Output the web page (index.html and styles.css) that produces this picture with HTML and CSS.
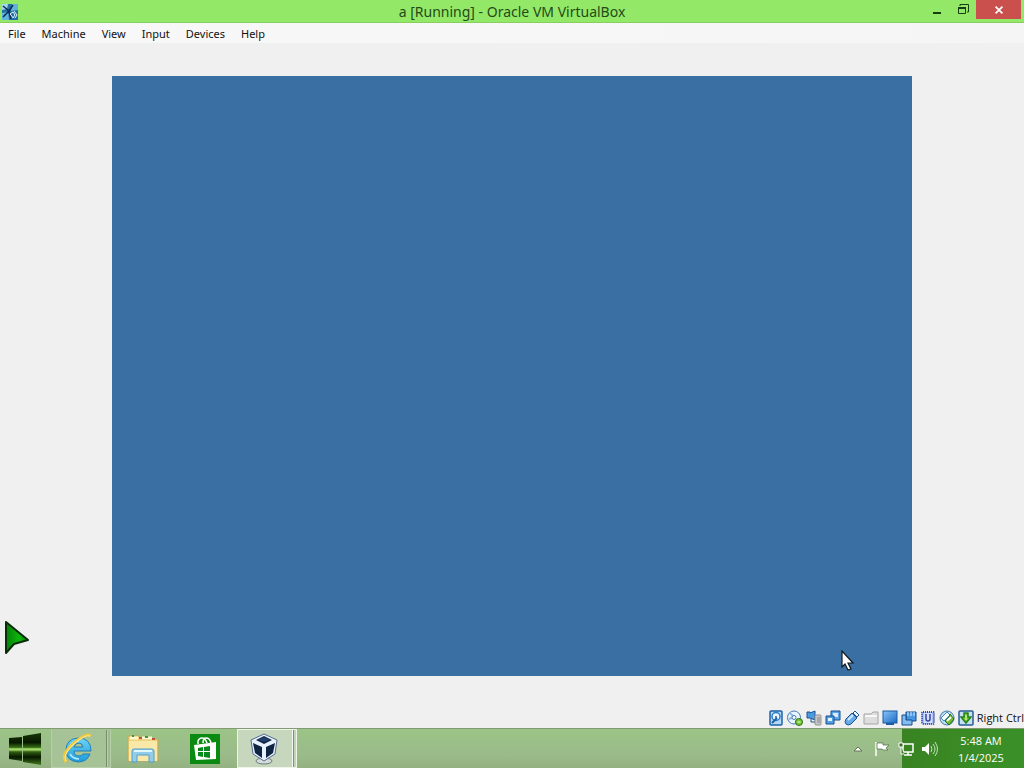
FILE: index.html
```html
<!DOCTYPE html>
<html lang="en">
<head>
<meta charset="utf-8">
<title>a [Running] - Oracle VM VirtualBox</title>
<link rel="stylesheet" href="styles.css">
</head>
<body>
<div class="desktop">
  <header class="titlebar">
    <svg class="app-icon" viewBox="0 0 18 18" aria-hidden="true">
      <rect x="1" y="1" width="16" height="16" fill="#2370a6"/>
      <path d="M1 1h6l-1 5-5 1z" fill="#a6d8ec"/><path d="M11 1h6v6l-7 1z" fill="#60b4da"/>
      <path d="M1 10l6-1 1 8H1z" fill="#5fb3df"/>
      <path d="M2 3l6 5 2 8M12 2L8 8l-6 6" stroke="#0c2c50" stroke-width="1.500" fill="none"/>
      <path d="M9 11l3-2 2 3-2 3-2-3zM13 8l3 4-2 3" stroke="#e4f4fa" fill="none"/>
    </svg>
    <h1 class="title">a [Running] - Oracle VM VirtualBox</h1>
    <div class="window-buttons">
      <button class="window-button" aria-label="Minimize"><svg viewBox="0 0 14 14"><path d="M3 9h8v2H3z" fill="#163c10"/></svg></button>
      <button class="window-button" aria-label="Restore"><svg viewBox="0 0 14 14"><path d="M4 3V1.500h8.500V9H11" stroke="#163c10" fill="none"/><path d="M2.500 4.500h7v6h-7z" stroke="#163c10" fill="none"/><path d="M2 4h8v2H2z" fill="#163c10"/></svg></button>
      <button class="window-button close" aria-label="Close"><svg viewBox="0 0 14 14"><path d="M3 3l8 8M11 3l-8 8" stroke="#fff" stroke-width="2" fill="none"/></svg></button>
    </div>
  </header>
  <nav class="menubar" aria-label="Main menu">
    <button>File</button><button>Machine</button><button>View</button><button>Input</button><button>Devices</button><button>Help</button>
  </nav>
  <main class="workspace">
    <div class="guest-screen">
      <svg class="guest-cursor" viewBox="0 0 14 22" aria-hidden="true"><path d="M1 1v16l3-3 3 6 3-1-3-6h5z" fill="#fff" stroke="#101820" stroke-width="1.200"/></svg>
    </div>
    <svg class="host-cursor" viewBox="0 0 26 36" aria-hidden="true"><defs><linearGradient id="arrow"><stop offset="0" stop-color="#087f08"/><stop offset=".6" stop-color="#0cb70c"/><stop offset="1" stop-color="#078407"/></linearGradient></defs><path d="M2 2v31l8-9 14-4z" fill="url(#arrow)" stroke="#082d08" stroke-width="2" stroke-linejoin="round"/></svg>
  </main>
  <footer class="statusbar">
    <svg viewBox="0 0 16 16"><rect x="2" y="1" width="12" height="14" rx="1" fill="#b5d8f6" stroke="#1e61a8" stroke-width="1.500"/><circle cx="8" cy="6.500" r="4" fill="#e9f6ff" stroke="#2d7dc8" stroke-width="1.500"/><path d="M4 13l5-5" stroke="#1e61a8" stroke-width="2"/><circle cx="8" cy="7" r="1" fill="#1e61a8"/></svg>
    <svg viewBox="0 0 16 16"><circle cx="7" cy="7.500" r="6.500" fill="#e8f4ff" stroke="#467ab0"/><path d="M7 7L3 3M7 7l-5 2" stroke="#8bbbe4" stroke-width="2"/><circle cx="7" cy="7.500" r="2" fill="#fff" stroke="#467ab0"/><circle cx="12" cy="12" r="3.500" fill="#75c62e" stroke="#2c701d"/><path d="M10.500 12h3" stroke="#fff"/></svg>
    <svg viewBox="0 0 16 16"><path d="M1 2h3v1l5-2v9L4 8H1z" fill="#4d9be0" stroke="#185594"/><path d="M5 9v3h4" stroke="#185594" fill="none"/><rect x="9" y="5" width="6" height="10" rx="1" fill="#c8c8c8" stroke="#919191"/><path d="M11 8h3M11 10h3M11 12h3" stroke="#888"/></svg>
    <svg viewBox="0 0 16 16"><path d="M6 1h9v9H6z" fill="#5da5e8" stroke="#174e8c"/><path d="M8 3h5v4H8z" fill="#d5edff"/><path d="M1 6h8v8H1z" fill="#539ee4" stroke="#174e8c"/><path d="M3 8h4v3H3z" fill="#e6f5ff"/></svg>
    <svg viewBox="0 0 16 16"><path d="M2 9l6-6 5 5-6 6q-3 2-5 0t0-5z" fill="#65aaea" stroke="#1c5592"/><path d="M9 3l2-2 4 4-2 2z" fill="#eef8ff" stroke="#1c5592"/><path d="M4 10l5-5" stroke="#d2ebff" stroke-width="2"/></svg>
    <svg viewBox="0 0 16 16"><path d="M1 4h7l2-2h5v12H1z" fill="#ddd" stroke="#a5a5a5"/><path d="M2 6h12" stroke="#f7f7f7" stroke-width="2"/></svg>
    <svg viewBox="0 0 16 16"><defs><linearGradient id="display" x2="1" y2="1"><stop stop-color="#87c5fa"/><stop offset="1" stop-color="#1b69c2"/></linearGradient></defs><rect x="1" y="1" width="14" height="12" fill="url(#display)" stroke="#1b5ca4"/><path d="M4 14h8" stroke="#1b5ca4" stroke-width="2"/></svg>
    <svg viewBox="0 0 16 16"><path d="M5 2h10v9H5z" fill="#4796e4" stroke="#164d88"/><path d="M1 5h4v5h6v5H1z" fill="#82bdf2" stroke="#164d88"/><path d="M7 2v4M10 2v4M13 2v4" stroke="#d5edff"/></svg>
    <svg viewBox="0 0 16 16"><rect x="2" y="2" width="12" height="12" rx="1" fill="#aebff7" stroke="#3548a0" stroke-width="2" stroke-dasharray="1 1"/><rect x="4" y="3" width="8" height="10" fill="#d4defd"/><path d="M6 4v5q0 2 2 2t2-2V4" stroke="#3446a6" stroke-width="1.500" fill="none"/></svg>
    <svg viewBox="0 0 16 16"><circle cx="8" cy="8" r="7" fill="#b9dcf7" stroke="#49799e"/><path d="M2 8l6-6 3 3-6 6z" fill="#f3fbff" stroke="#4b8abc"/><path d="M6 11l4 4 5-6-4-5-1 3z" fill="#6dbf2d" stroke="#286c1f"/><path d="M8 11l4-4" stroke="#fff" stroke-width="2"/></svg>
    <svg viewBox="0 0 16 16"><rect x="1" y="1" width="14" height="14" rx="1" fill="#c5dff5" stroke="#285c93" stroke-width="1.500"/><path d="M6 3h4v4h3l-5 6-5-6h3z" fill="#73cb25" stroke="#27801d" stroke-width="1.500"/><path d="M8 5v5" stroke="#efffd9"/></svg>
    <span class="host-key">Right Ctrl</span>
  </footer>
  <nav class="taskbar" aria-label="Taskbar">
    <button class="start" aria-label="Start"><svg viewBox="0 0 34 32"><defs><linearGradient id="start" x2="0" y2="1"><stop stop-color="#173706"/><stop offset=".3" stop-color="#071800"/><stop offset=".45" stop-color="#376e16"/><stop offset=".51" stop-color="#bdf579"/><stop offset=".59" stop-color="#315d14"/><stop offset=".75" stop-color="#071600"/><stop offset="1" stop-color="#427b1c"/></linearGradient></defs><path d="M1 5l13-1v24L1 26zM15 3l18-3v32l-18-3z" fill="url(#start)"/><path d="M1 16h32" stroke="#91c760"/></svg></button>
    <div class="apps">
      <button class="app open" aria-label="Internet Explorer"><svg viewBox="0 0 32 32"><defs><linearGradient id="globe" x2="0" y2="1"><stop stop-color="#6fd3f6"/><stop offset="1" stop-color="#1f9bda"/></linearGradient></defs><path d="M28 21q-3 8-12 8Q4 28 4 17T16 5q13 0 13 13H12q0 5 5 5 3 0 4-2zM12 14h9q-1-4-4-4-4 0-5 4z" fill="url(#globe)" stroke="#2380b8"/><path d="M8 13q3-5 9-5M8 21q3 5 9 5" stroke="#b1ecff" stroke-width="1.500" fill="none"/><path d="M4 29Q-2 22 12 10 25-1 29 3" stroke="#efc83b" stroke-width="3" fill="none"/><path d="M4 28Q0 21 13 10 24 1 28 3" stroke="#fff0a1" fill="none"/></svg></button>
      <button class="app" aria-label="File Explorer"><svg viewBox="0 0 32 32"><path d="M1 3h11l2 3h17v22H1z" fill="#efd37b" stroke="#c2a855"/><path d="M3 5h8M15 5h10" stroke="#fff8ce" stroke-width="3"/><path d="M5 3h2M18 4h3" stroke="#439641" stroke-width="2"/><path d="M12 5h3M25 6h3" stroke="#bd5144" stroke-width="2"/><path d="M2 8h28v20H2z" fill="#f9e8a8"/><path d="M5 29V18q0-2 2-2h18q2 0 2 2v11h-5v-7H10v7z" fill="#91cce9" stroke="#539fc8"/><path d="M7 18h18" stroke="#e2f8ff" stroke-width="2"/></svg></button>
      <button class="app" aria-label="Store"><svg viewBox="0 0 32 32"><path d="M1 1h30v30H1z" fill="#0b8a12"/><path d="M5 12l22-3v17L7 27z" fill="#fff"/><path d="M9 11V8q1-3 4-3t5 5M14 10q0-5 3-5 4 0 5 5" stroke="#fff" stroke-width="1.500" fill="none"/><path d="M9 15l5-1v4H9zm6-1l6-1v5h-6zm-6 5h5v5l-5-1zm6 0h6v6l-6-1z" fill="#07891c"/></svg></button>
      <button class="app open active" aria-label="Oracle VM VirtualBox"><svg viewBox="0 0 32 32"><ellipse cx="16" cy="28" rx="8" ry="3" fill="#d5dcda" stroke="#6e7c7b"/><path d="M16 1l13 6-2 14-11 7-11-7L3 7z" fill="#e7f1ff" stroke="#566c8d"/><path d="M8 7l8-4 8 4-8 4zM5 10l9 4v11l-7-5zM18 14l9-4-2 10-7 5z" fill="#102541"/><path d="M10 7l6-3 6 3-6 2z" fill="#223f6b"/></svg></button>
    </div>
    <div class="tray">
      <button class="tray-button" aria-label="Show hidden icons"><svg viewBox="0 0 18 18"><path d="M5 11l4-4 4 4z" fill="#fff" stroke="#617455"/></svg></button>
      <button class="tray-button" aria-label="Action Center"><svg viewBox="0 0 18 18"><path d="M3 2v14" stroke="#fff" stroke-width="1.500"/><path d="M4 3h6v2h6l-3 3 2 2h-5L9 9H4z" fill="#fff" stroke="#4c693d" stroke-width=".7"/></svg></button>
      <button class="tray-button" aria-label="Network"><svg viewBox="0 0 18 18"><path d="M6 4h10v8H6zM11 12v3M7 15h8" stroke="#fff" stroke-width="1.500" fill="none"/><path d="M2 3h4v4H2zM4 7v7h3" stroke="#fff" fill="#376a2b"/></svg></button>
      <button class="tray-button" aria-label="Volume"><svg viewBox="0 0 18 18"><path d="M1 7h3l4-4v12l-4-4H1z" fill="#fff"/><path d="M10 6q2 3 0 6M12 4q4 5 0 10M14 2q5 7 0 14" stroke="#e9f7df" stroke-width=".8" fill="none"/></svg></button>
      <button class="clock"><time datetime="2025-01-04T05:48">5:48 AM<br>1/4/2025</time></button>
    </div>
  </nav>
</div>
</body>
</html>
```
FILE: styles.css
```css
* { box-sizing: border-box; }
body { margin: 0; font-family: "Open Sans", "Noto Sans", sans-serif; font-size: 11px; color: #111; }
button { font: inherit; color: inherit; border: 0; padding: 0; margin: 0; background: transparent; }
svg { display: block; flex: none; }
.desktop { min-height: 100vh; display: flex; flex-direction: column; background: #f0f0f0; }
.titlebar { display: grid; grid-template-columns: 1fr auto 1fr; align-items: center; height: 23px; background: #94e868; border-bottom: 1px solid #86cf60; }
.app-icon { width: 18px; height: 18px; margin-left: 1px; }
.title { margin: 0; font-family: "Noto Sans", sans-serif; font-size: 14px; line-height: 22px; padding-top: 1px; font-weight: 400; color: #234b17; }
.window-buttons { display: flex; justify-content: flex-end; align-self: start; padding-right: 3px; }
.window-button { width: 26px; height: 19px; display: grid; place-items: center; }
.window-button svg { width: 14px; height: 14px; }
.window-button.close { width: 45px; background: #c9504c; }
.window-button.close svg { width: 12px; height: 12px; }
.menubar { display: flex; height: 20px; background: linear-gradient(90deg, #f8f8f8, #f5f5f5); font-family: "Noto Sans", sans-serif; }
.menubar button { padding: 1px 8px 0; line-height: 20px; }
.workspace { flex: 1; display: flex; align-items: center; justify-content: center; position: relative; }
.guest-screen { position: relative; width: 800px; max-width: 100%; aspect-ratio: 4 / 3; background: #3a6fa3; }
.guest-cursor { position: absolute; right: 57px; bottom: 4px; width: 14px; height: 22px; }
.host-cursor { position: absolute; left: 4px; bottom: 52px; width: 26px; height: 36px; }
.statusbar { display: flex; justify-content: flex-end; align-items: center; gap: 3px; height: 20px; }
.statusbar svg { width: 16px; height: 16px; }
.host-key { line-height: 20px; white-space: nowrap; }
.taskbar { display: flex; height: 40px; background: linear-gradient(#9cc487, #9aba8a 70%, #94b181); border-top: 1px solid #829b75; }
.start { width: 51px; padding-left: 8px; }
.start svg { width: 34px; height: 32px; }
.apps { display: flex; flex: 1; gap: 2px; }
.app { width: 60px; display: grid; place-items: center; }
.app svg { width: 32px; height: 32px; }
.app.open { padding-right: 6px; border: 1px solid #b9ceab; border-top-color: #a6c494; background: linear-gradient(90deg, #a5c396 0 54px, #758e68 54px 55px, #b9ceab 55px 56px, #9dba8e 56px); }
.app.active { border-color: #eef4e8; background: linear-gradient(90deg, #c6d7bd 0 54px, #f5f9f1 54px 55px, #7c9270 55px 56px, #c3d5b9 56px); }
.tray { display: flex; align-items: center; background: linear-gradient(90deg, transparent 56px, #398322 56px, #3a9128); }
.tray-button { width: 24px; height: 39px; display: grid; place-items: center; }
.tray-button svg { width: 18px; height: 18px; }
.clock { width: 82px; padding-right: 4px; align-self: stretch; color: #fff; line-height: 17px; text-align: center; }
```
